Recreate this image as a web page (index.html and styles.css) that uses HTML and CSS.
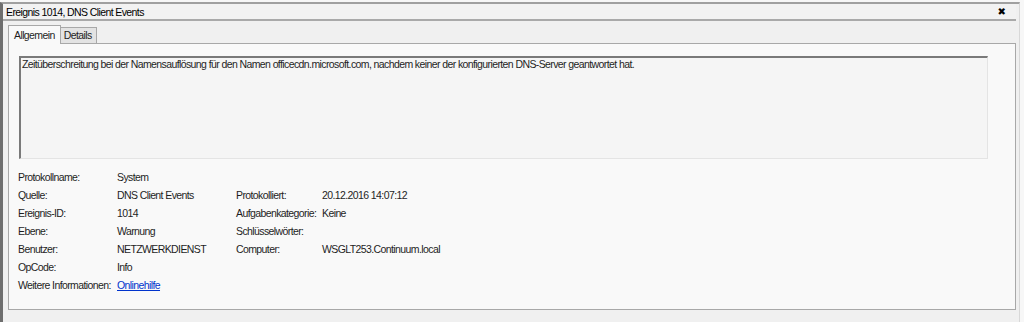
FILE: index.html
```html
<!DOCTYPE html>
<html lang="de">
<head>
    <meta charset="UTF-8">
    <title>Ereignis 1014, DNS Client Events</title>
    <link rel="stylesheet" href="styles.css">
</head>
<body>
    <div class="window">
        <header class="titlebar">
            <span class="title">Ereignis 1014, DNS Client Events</span>
            <span class="close">&#x2716;</span>
        </header>

        <div class="tabs">
            <div class="tab active">Allgemein</div>
            <div class="tab">Details</div>
        </div>

        <section class="panel">
            <div class="message">Zeitüberschreitung bei der Namensauflösung für den Namen officecdn.microsoft.com, nachdem keiner der konfigurierten DNS-Server geantwortet hat.</div>

            <div class="props">
                <div class="label">Protokollname:</div>
                <div class="value">System</div>
                <div class="label2"></div>
                <div class="value2"></div>

                <div class="label">Quelle:</div>
                <div class="value">DNS Client Events</div>
                <div class="label2">Protokolliert:</div>
                <div class="value2">20.12.2016 14:07:12</div>

                <div class="label">Ereignis-ID:</div>
                <div class="value">1014</div>
                <div class="label2">Aufgabenkategorie:</div>
                <div class="value2">Keine</div>

                <div class="label">Ebene:</div>
                <div class="value">Warnung</div>
                <div class="label2">Schlüsselwörter:</div>
                <div class="value2"></div>

                <div class="label">Benutzer:</div>
                <div class="value">NETZWERKDIENST</div>
                <div class="label2">Computer:</div>
                <div class="value2">WSGLT253.Continuum.local</div>

                <div class="label">OpCode:</div>
                <div class="value">Info</div>
                <div class="label2"></div>
                <div class="value2"></div>

                <div class="label">Weitere Informationen:</div>
                <div class="value"><a href="#" class="link">Onlinehilfe</a></div>
                <div class="label2"></div>
                <div class="value2"></div>
            </div>
        </section>
    </div>
</body>
</html>
```

FILE: styles.css
```css
* {
    margin: 0;
    padding: 0;
    box-sizing: border-box;
}

body {
    background-color: #f7f7f7;
    font-family: 'Liberation Sans', Arial, sans-serif;
    font-size: 10.5px;
    letter-spacing: -0.6px;
    color: #1e1e1e;
    padding-top: 2px;
}

.window {
    width: 1020px;
    height: 320px;
    background-color: #f0f0f0;
    border-top: 2px solid #a0a0a0;
    border-left: 3px solid #6e6e6e;
    border-right: 1px solid #d8d8d8;
    padding: 0 3px 0 0;
}

.titlebar {
    display: flex;
    justify-content: space-between;
    align-items: center;
    height: 17px;
    padding: 0 10px 0 3px;
    border-bottom: 2px solid #a9a9a9;
    background-color: #f2f2f2;
}

.title {
    color: #000;
}

.close {
    font-family: 'DejaVu Sans', sans-serif;
    font-size: 10px;
    font-weight: bold;
    letter-spacing: 0;
    color: #000;
}

.tabs {
    display: flex;
    align-items: flex-end;
    height: 22px;
    padding-left: 5px;
}

.tab {
    height: 16px;
    padding: 1px 4px 0 3px;
    border: 1px solid #a8a8a8;
    border-bottom: none;
    background-color: #e3e3e3;
    margin-left: -1px;
}

.tab.active {
    height: 19px;
    padding: 3px 5px 0;
    background-color: #f9f9f9;
    position: relative;
    top: 1px;
    margin-left: 0;
    z-index: 1;
}

.panel {
    margin-left: 5px;
    height: 267px;
    border: 1px solid #a8a8a8;
    background-color: #f9f9f9;
    padding: 12px 27px 0 10px;
}

.message {
    height: 103px;
    border-top: 2px solid #7a7a7a;
    border-left: 2px solid #7a7a7a;
    border-right: 1px solid #e4e4e4;
    border-bottom: 1px solid #e4e4e4;
    padding: 0 1px;
    background-color: #f5f5f5;
}

.props {
    display: grid;
    grid-template-columns: 99px 119px 86px 1fr;
    grid-auto-rows: 18px;
    margin: 12px 0 0 -1px;
}

.label {
    white-space: nowrap;
}

.link {
    color: #0033cc;
    text-decoration: underline;
}
```
